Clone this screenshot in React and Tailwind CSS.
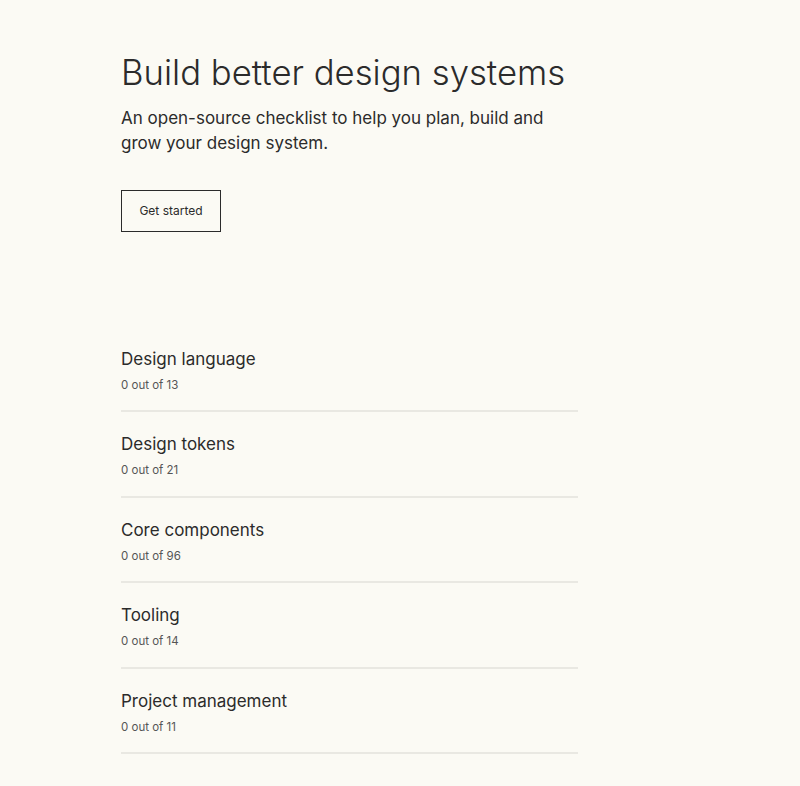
import React from "react";

const items = [
  { title: "Design language", total: 13 },
  { title: "Design tokens", total: 21 },
  { title: "Core components", total: 96 },
  { title: "Tooling", total: 14 },
  { title: "Project management", total: 11 },
];

export default function App() {
  return (
    <div
      className="min-h-[786px] bg-[#fbfaf4] text-[#2b2b2b]"
      style={{ fontFamily: "Inter, 'Liberation Sans', sans-serif" }}
    >
      <div className="pl-[121px] pt-[48px] w-[578px]">
        <h1 className="text-[34.7px] leading-[48px] font-light">
          Build better design systems
        </h1>
        <p className="mt-[10px] text-[17px] leading-[25px] w-[440px]">
          An open-source checklist to help you plan, build and grow your design system.
        </p>
        <button className="mt-[34px] h-[42px] w-[100px] border border-[#2b2b2b] text-[12px]">
          Get started
        </button>
        <div className="mt-[106.5px]">
          {items.map((it) => (
            <div key={it.title} className="pt-[8px] pb-[16.5px] border-b-2 border-[#e9e8e2] mb-[12px]">
              <div className="text-[17px] leading-[24px]">{it.title}</div>
              <div className="mt-[6px] text-[11.5px] leading-[17px] text-[#555]">0 out of {it.total}</div>
            </div>
          ))}
        </div>
      </div>
    </div>
  );
}
